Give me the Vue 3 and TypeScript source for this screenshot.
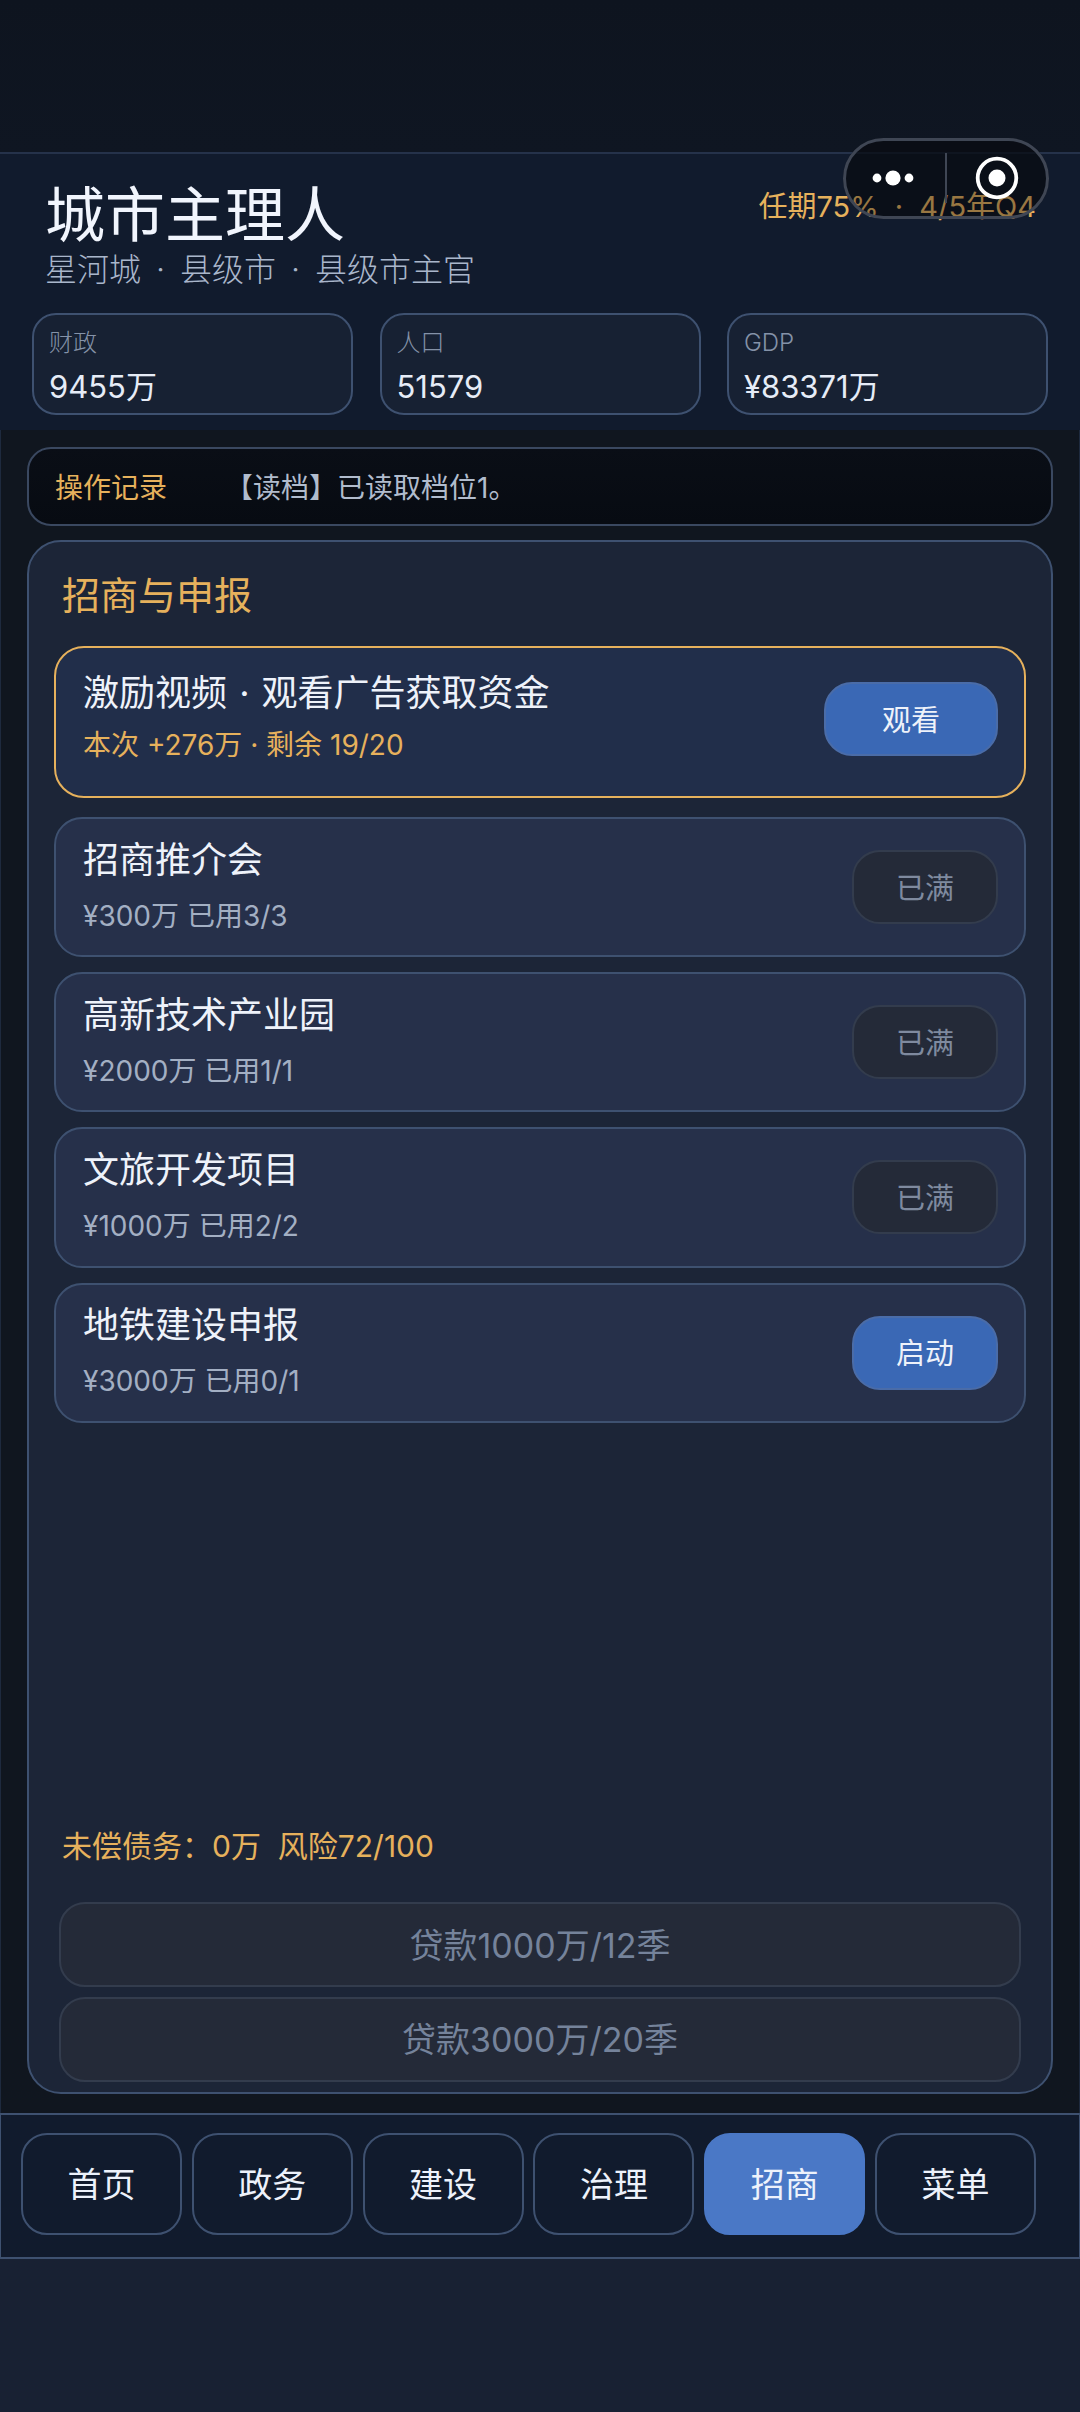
<script setup lang="ts">
interface Stat { label: string; value: string }
interface Item { name: string; desc: string; action: string; on: boolean }
const stats: Stat[] = [
  { label: '财政', value: '9455万' },
  { label: '人口', value: '51579' },
  { label: 'GDP', value: '¥83371万' },
]
const items: Item[] = [
  { name: '招商推介会', desc: '¥300万 已用3/3', action: '已满', on: false },
  { name: '高新技术产业园', desc: '¥2000万 已用1/1', action: '已满', on: false },
  { name: '文旅开发项目', desc: '¥1000万 已用2/2', action: '已满', on: false },
  { name: '地铁建设申报', desc: '¥3000万 已用0/1', action: '启动', on: true },
]
const tabs = ['首页', '政务', '建设', '治理', '招商', '菜单']
const loans = ['贷款1000万/12季', '贷款3000万/20季']
</script>

<template>
  <div class="page">
    <div class="capsule-back"></div>
    <header class="head">
      <div class="title-row">
        <div>
          <div class="title">城市主理人</div>
          <div class="sub">星河城 · 县级市 · 县级市主官</div>
        </div>
        <div class="term">任期75% · 4/5年Q4</div>
      </div>
      <div class="stats">
        <div v-for="s in stats" :key="s.label" class="stat">
          <div class="stat-label">{{ s.label }}</div>
          <div class="stat-value">{{ s.value }}</div>
        </div>
      </div>
    </header>

    <main class="main">
      <div class="log">
        <span class="log-label">操作记录</span>
        <span class="log-text">【读档】已读取档位1。</span>
      </div>

      <section class="panel">
        <h2 class="panel-title">招商与申报</h2>
        <div class="list">
          <div class="card ad">
            <div class="card-body">
              <div class="card-name">激励视频 · 观看广告获取资金</div>
              <div class="card-desc gold">本次 +276万 · 剩余 19/20</div>
            </div>
            <div class="btn on wide">观看</div>
          </div>
          <div v-for="it in items" :key="it.name" class="card">
            <div class="card-body">
              <div class="card-name">{{ it.name }}</div>
              <div class="card-desc">{{ it.desc }}</div>
            </div>
            <div class="btn" :class="{ on: it.on }">{{ it.action }}</div>
          </div>
        </div>
        <div class="debt">未偿债务：0万&nbsp;&nbsp;风险72/100</div>
        <div class="loans">
          <div v-for="l in loans" :key="l" class="loan">{{ l }}</div>
        </div>
      </section>
    </main>

    <nav class="tabs">
      <div v-for="t in tabs" :key="t" class="tab" :class="{ active: t === '招商' }">{{ t }}</div>
    </nav>
    <div class="foot"></div>

    <div class="capsule">
      <svg class="dots" width="44" height="16" viewBox="0 0 44 16">
        <circle cx="5" cy="8" r="4.4" fill="#fff" />
        <circle cx="21" cy="8" r="7.6" fill="#fff" />
        <circle cx="37" cy="8" r="4.4" fill="#fff" />
      </svg>
      <span class="divider"></span>
      <svg class="target" width="44" height="44" viewBox="0 0 44 44">
        <circle cx="22" cy="22" r="19.3" fill="none" stroke="#fff" stroke-width="3.8" />
        <circle cx="22" cy="22" r="8.5" fill="#fff" />
      </svg>
    </div>
  </div>
</template>

<style>
html, body { margin: 0; background: #182133; }
</style>

<style scoped>
* { box-sizing: border-box; }
.page {
  position: relative;
  width: 1080px;
  height: 2412px;
  padding-top: 152px;
  overflow: hidden;
  display: flex;
  flex-direction: column;
  background: linear-gradient(180deg, #0e141f 0, #0f1622 152px);
  font-family: Inter, "Noto Sans CJK SC", sans-serif;
  font-weight: 400;
  color: #edf2fb;
}
.head {
  height: 278px;
  flex: none;
  padding: 0 32px;
  background: #111b2d;
  border-top: 2px solid #25324a;
  display: flex;
  flex-direction: column;
}
.title-row {
  display: flex;
  justify-content: space-between;
  align-items: flex-start;
  padding: 23px 12px 0 13px;
}
.title { font-size: 60px; line-height: 76px; color: #f1f5fd; }
.sub { font-size: 32px; line-height: 40px; word-spacing: 6px; color: #a9b6cb; margin-top: -3px; font-weight: 300; }
.term { position: relative; z-index: 2; font-size: 29px; line-height: 40px; word-spacing: 8px; color: #e6b15c; margin-top: 10px; }
.stats { display: flex; gap: 26.5px; margin-top: 23px; }
.stat {
  flex: 1;
  height: 102px;
  padding: 12px 16px 0 15px;
  background: #172133;
  border: 2px solid #3e5170;
  border-radius: 24px;
}
.stat-label { font-size: 24px; line-height: 32px; color: #8492a8; font-weight: 300; }
.stat-value { font-size: 31px; line-height: 46px; color: #e6ecf7; margin-top: 5px; }
.main {
  height: 1683px;
  flex: none;
  padding: 17px 26px 0;
  background: #10161f;
  border-left: 1px solid #1e2a3e;
  border-right: 1px solid #1e2a3e;
  display: flex;
  flex-direction: column;
  gap: 14px;
}
.log {
  height: 79px;
  flex: none;
  display: flex;
  align-items: center;
  padding: 0 26px 2px;
  background: linear-gradient(180deg, #0a0e16, #070b12);
  border: 2px solid #3a4860;
  border-radius: 24px;
}
.log-label { font-size: 28px; color: #e6b15c; width: 170px; }
.log-text { font-size: 28px; color: #b1bccd; }
.panel {
  height: 1554px;
  flex: none;
  padding: 26.5px 25px 10.5px;
  background: #1c2537;
  border: 2px solid #3e5170;
  border-radius: 34px;
  display: flex;
  flex-direction: column;
}
.panel-title { margin: 0; padding-left: 8px; font-size: 38px; line-height: 52px; font-weight: 400; color: #e6b15c; }
.list { display: flex; flex-direction: column; gap: 15px; margin-top: 25.5px; }
.card {
  height: 140.2px;
  flex: none;
  padding: 0 26px 0 27px;
  display: flex;
  align-items: center;
  justify-content: space-between;
  background: #26304a;
  border: 2px solid #3e5170;
  border-radius: 28px;
}
.card.ad { height: 152px; background: #212e4a; border-color: #e6b15c; border-radius: 30px; margin-bottom: 4px; padding-bottom: 8px; }
.card-name { font-size: 36px; line-height: 48px; word-spacing: 2px; color: #eef2fa; margin-top: 1px; }
.card-desc { font-size: 28px; line-height: 36px; color: #a3afc3; margin-top: 14px; }
.card-desc.gold { color: #e6b15c; margin-top: 10px; }
.card-body { margin-bottom: 6px; }
.btn {
  width: 146px;
  height: 74px;
  padding-bottom: 3px;
  flex: none;
  display: flex;
  align-items: center;
  justify-content: center;
  font-size: 29px;
  color: #7f8a9f;
  background: #242a38;
  border: 2px solid #333c4d;
  border-radius: 28px;
}
.btn.on { background: #3a68b5; border-color: #4a6ca8; color: #eef2fa; }
.btn.wide { width: 174px; margin-top: 2px; }
.debt { margin-top: auto; padding-left: 8px; font-size: 30px; line-height: 40px; color: #e6b15c; }
.loans { display: flex; flex-direction: column; gap: 9.5px; margin-top: 36px; }
.loan {
  height: 85px;
  flex: none;
  margin: 0 5px;
  padding-bottom: 3px;
  display: flex;
  align-items: center;
  justify-content: center;
  font-size: 34px;
  color: #75839b;
  background: #242a38;
  border: 2px solid #333c4d;
  border-radius: 26px;
}
.tabs {
  height: 146px;
  flex: none;
  padding: 18px 20px 0;
  display: flex;
  gap: 9.8px;
  background: #111b2d;
  border-top: 2px solid #3e5170;
  border-bottom: 2px solid #3e5170;
  border-left: 1px solid #3e5170;
  border-right: 1px solid #3e5170;
}
.tab {
  width: 161px;
  height: 102px;
  padding-bottom: 3px;
  display: flex;
  align-items: center;
  justify-content: center;
  font-size: 34px;
  color: #edf2fb;
  background: #111b2d;
  border: 2px solid #3e5170;
  border-radius: 26px;
}
.tab.active { background: #4a78c6; border-color: #4a78c6; }
.foot { flex: 1; background: #182133; }
.capsule-back,
.capsule {
  position: absolute;
  left: 843px;
  top: 138px;
  width: 206px;
  height: 81px;
  border-radius: 41px;
}
.capsule-back { z-index: 1; background: rgba(8, 11, 18, 0.6); }
.capsule {
  z-index: 3;
  background: rgba(8, 11, 18, 0.35);
  border: 3px solid #3f4654;
}
.dots { position: absolute; left: 26px; top: 29px; }
.divider { position: absolute; left: 99px; top: 12px; width: 2px; height: 50px; background: #3f4654; }
.target { position: absolute; left: 129px; top: 15px; }
</style>
